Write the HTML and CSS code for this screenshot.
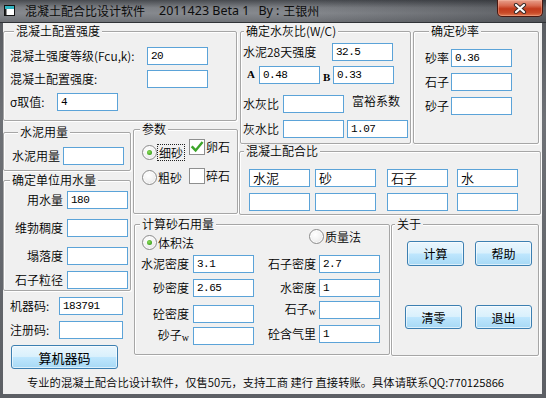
FILE: index.html
```html
<!DOCTYPE html>
<html>
<head>
<meta charset="utf-8">
<link rel="stylesheet" href="styles.css">
</head>
<body>
<div class="window">
  <div class="titlebar">
    <svg class="app-icon" width="11" height="11" viewBox="0 0 11 11"><rect x="0.5" y="0.5" width="10" height="10" fill="#fff" stroke="#111"/><rect x="1" y="1" width="9" height="3" fill="#2fb3c0"/><rect x="1" y="4" width="1.5" height="6" fill="#222"/></svg>
    <span class="t-main">混凝土配合比设计软件</span>
    <span class="t-ver">2011423 Beta 1</span>
    <span class="t-by">By</span>
    <span class="t-colon">:</span>
    <span class="t-author">王银州</span>
    <div class="close-btn">
      <svg width="14" height="11" viewBox="0 0 14 11"><path d="M3 2 L11 9 M11 2 L3 9" stroke="#3a2a28" stroke-width="4.2" stroke-linecap="round"/><path d="M3 2 L11 9 M11 2 L3 9" stroke="#fff" stroke-width="2.2" stroke-linecap="round"/></svg>
    </div>
  </div>
  <div class="client">
    <div class="layout">
      <fieldset class="grp g-strength">
        <legend class="lg7">混凝土配置强度</legend>
        <div class="row"><span class="lbl w137">混凝土强度等级(Fcu,k):</span><div class="tb">20</div></div>
        <div class="row mt5"><span class="lbl w137">混凝土配置强度:</span><div class="tb"></div></div>
        <div class="row mt5"><span class="lbl w47">σ取值:</span><div class="tb">4</div></div>
      </fieldset>

      <fieldset class="grp g-wc">
        <legend class="lg4">确定水灰比(W/C)</legend>
        <div class="row mt5"><span class="lbl w89">水泥28天强度</span><div class="tb">32.5</div></div>
        <div class="row mt5"><span class="ab ab-a">A</span><div class="tb">0.48</div><span class="ab ab-b">B</span><div class="tb">0.33</div></div>
        <div class="row mt11"><span class="lbl w40">水灰比</span><div class="tb"></div><span class="lbl note">富裕系数</span></div>
        <div class="row mt7"><span class="lbl w40">灰水比</span><div class="tb"></div><div class="tb ml3">1.07</div></div>
      </fieldset>

      <fieldset class="grp g-sand">
        <legend class="lg7">确定砂率</legend>
        <div class="row mt11"><span class="lbl w26">砂率</span><div class="tb">0.36</div></div>
        <div class="row mt6"><span class="lbl w26">石子</span><div class="tb"></div></div>
        <div class="row mt6"><span class="lbl w26">砂子</span><div class="tb"></div></div>
      </fieldset>

      <fieldset class="grp g-cement">
        <legend class="lg9">水泥用量</legend>
        <div class="row mt8"><span class="lbl w51">水泥用量</span><div class="tb"></div></div>
      </fieldset>

      <fieldset class="grp g-param">
        <legend class="lg9">参数</legend>
        <div class="param-body">
          <div class="pcol radios">
            <div class="opt"><span class="radio on"></span><span class="olbl focus">细砂</span></div>
            <div class="opt"><span class="radio"></span><span class="olbl">粗砂</span></div>
          </div>
          <div class="pcol checks">
            <div class="opt"><span class="check"><svg width="14" height="14" viewBox="0 0 14 14"><path d="M2.5 7.2 L5.6 10.4 L11.8 3" fill="none" stroke="#3da52a" stroke-width="2.4" stroke-linecap="square"/></svg></span><span class="olbl">卵石</span></div>
            <div class="opt"><span class="check"></span><span class="olbl">碎石</span></div>
          </div>
        </div>
      </fieldset>

      <fieldset class="grp g-mix">
        <legend class="lg7">混凝土配合比</legend>
        <div class="mix-grid">
          <div class="tb cjk">水泥</div>
          <div class="tb cjk">砂</div>
          <div class="tb cjk">石子</div>
          <div class="tb cjk">水</div>
          <div class="tb"></div>
          <div class="tb"></div>
          <div class="tb"></div>
          <div class="tb"></div>
        </div>
      </fieldset>

      <fieldset class="grp g-water">
        <legend class="lg9">确定单位用水量</legend>
        <div class="row mt4"><span class="lbl r w59">用水量</span><div class="tb ml4">180</div></div>
        <div class="row mt10"><span class="lbl r w59">维勃稠度</span><div class="tb ml4"></div></div>
        <div class="row mt10"><span class="lbl r w59">塌落度</span><div class="tb ml4"></div></div>
        <div class="row mt6"><span class="lbl r w59">石子粒径</span><div class="tb ml4"></div></div>
      </fieldset>

      <div class="reg">
        <div class="row"><span class="lbl w49">机器码:</span><div class="tb w64">183791</div></div>
        <div class="row mt6"><span class="lbl w49">注册码:</span><div class="tb w64"></div></div>
        <button class="btn btn-code">算机器码</button>
      </div>

      <fieldset class="grp g-calc">
        <legend class="lg8">计算砂石用量</legend>
        <div class="calc-radios">
          <div class="opt vol"><span class="radio on"></span><span class="olbl">体积法</span></div>
          <div class="opt mass"><span class="radio"></span><span class="olbl">质量法</span></div>
        </div>
        <div class="calc-cols">
          <div class="ccol">
            <div class="row"><span class="lbl r w48">水泥密度</span><div class="tb ml4">3.1</div></div>
            <div class="row mt6"><span class="lbl r w48">砂密度</span><div class="tb ml4">2.65</div></div>
            <div class="row mt8"><span class="lbl r w48">砼密度</span><div class="tb ml4"></div></div>
            <div class="row mt4"><span class="lbl r w48">砂子<span class="small-w">w</span></span><div class="tb ml4"></div></div>
          </div>
          <div class="ccol ccol-right">
            <div class="row"><span class="lbl r w48">石子密度</span><div class="tb ml3">2.7</div></div>
            <div class="row mt6"><span class="lbl r w48">水密度</span><div class="tb ml3">1</div></div>
            <div class="row mt4"><span class="lbl r w48">石子<span class="small-w">w</span></span><div class="tb ml3"></div></div>
            <div class="row mt6"><span class="lbl r w48">砼含气里</span><div class="tb ml3">1</div></div>
          </div>
        </div>
      </fieldset>

      <fieldset class="grp g-about">
        <legend class="lg6">关于</legend>
        <div class="btn-row br1"><button class="btn">计算</button><button class="btn">帮助</button></div>
        <div class="btn-row br2"><button class="btn">清零</button><button class="btn">退出</button></div>
      </fieldset>
    </div>
    <div class="status">专业的混凝土配合比设计软件，仅售50元，支持工商 建行 直接转账。具体请联系QQ:770125866</div>
  </div>
</div>
</body>
</html>
```
FILE: styles.css
```css
* { box-sizing: border-box; }
html, body { margin: 0; padding: 0; }
body {
  width: 546px;
  height: 398px;
  overflow: hidden;
  font-family: "Noto Sans CJK SC", "Noto Sans", sans-serif;
  font-weight: 350;
  font-size: 12px;
  line-height: 14px;
  color: #000;
  background: #fff;
}
.window {
  width: 546px;
  height: 398px;
  display: flex;
  flex-direction: column;
  background: linear-gradient(to bottom, #55585d 0, #6e7176 30%, #5c5f64 100%);
}
.titlebar {
  height: 23px;
  flex: none;
  display: flex;
  align-items: center;
  border-bottom: 1px solid #2f3236;
  background:
    linear-gradient(to right, rgba(0,0,0,0) 0, rgba(0,0,0,0) 55%, rgba(20,22,26,0.35) 100%),
    linear-gradient(to bottom, #474a4f 0, #7d8085 35%, #86898e 60%, #6f7277 100%);
  white-space: pre;
  color: #0c0c0c;
  font-weight: 400;
}
.app-icon { margin-left: 4px; margin-top: -1px; flex: none; }
.t-main { margin-left: 10px; font-size: 12px; }
.t-ver { margin-left: 14px; font-family: "Noto Sans", sans-serif; font-size: 12.5px; }
.t-by { margin-left: 9px; font-family: "Noto Sans", sans-serif; font-size: 12.5px; }
.t-colon { margin-left: 3px; font-family: "Noto Sans", sans-serif; font-size: 12.5px; }
.t-author { margin-left: 4px; font-size: 12px; }
.close-btn {
  margin-left: auto;
  margin-right: 3px;
  align-self: flex-start;
  width: 46px;
  height: 17px;
  border: 1px solid #4a1810;
  border-top: none;
  border-radius: 0 0 5px 5px;
  background: linear-gradient(to bottom, #e8a08c 0, #d86a50 35%, #c23a1c 55%, #c84a28 80%, #e07a52 100%);
  display: flex;
  align-items: center;
  justify-content: center;
  box-shadow: inset 0 0 0 1px rgba(255,200,180,0.35);
}
.client {
  flex: 1;
  margin: 0 4px 4px 3px;
  background: #f0f0f0;
  display: flex;
  flex-direction: column;
}
.layout {
  display: grid;
  grid-template-columns: 129px 106px 152px 21px 131px;
  grid-template-rows: 98px 23px 29px 42px 76px 65px 15px;
}
.grp {
  margin: 0;
  padding: 0;
  min-width: 0;
  border: 1px solid #a6a6a6;
  border-radius: 2px;
  box-shadow: inset 1px 1px 0 #fff, 1px 1px 0 #fff;
}
.grp > legend {
  padding: 0 2px;
  line-height: 14px;
  font-size: 12px;
  background: #f0f0f0;
}
.lg4 { margin-left: 1px; }
.lg6 { margin-left: 3px; }
.lg7 { margin-left: 4px; }
.lg8 { margin-left: 5px; }
.lg9 { margin-left: 6px; }

.row { display: flex; align-items: center; height: 18px; }
.mt4 { margin-top: 4px; }
.mt5 { margin-top: 5px; }
.mt6 { margin-top: 6px; }
.mt7 { margin-top: 7px; }
.mt8 { margin-top: 8px; }
.mt10 { margin-top: 10px; }
.mt11 { margin-top: 11px; }
.ml3 { margin-left: 3px; }
.ml4 { margin-left: 4px; }

.lbl { display: block; flex: none; white-space: nowrap; }
.lbl.r { text-align: right; }
.w26 { width: 26px; }
.w40 { width: 40px; }
.w47 { width: 47px; }
.w48 { width: 48px; }
.w49 { width: 49px; }
.w51 { width: 51px; }
.w59 { width: 59px; }
.w89 { width: 89px; }
.w137 { width: 137px; }
.small-w { font-family: "Liberation Serif", serif; font-size: 10px; vertical-align: -1px; }

.tb {
  flex: none;
  width: 61px;
  height: 18px;
  border: 1px solid #5ba3d8;
  background: #fff;
  font-family: "Liberation Mono", "DejaVu Sans Mono", monospace;
  font-weight: 400;
  font-size: 11px;
  letter-spacing: -0.5px;
  line-height: 16px;
  padding-left: 3px;
  white-space: pre;
}
.tb.w64 { width: 64px; }
.tb.cjk {
  font-family: "Noto Sans CJK SC", sans-serif;
  font-weight: 350;
  font-size: 13px;
  letter-spacing: 0;
  padding-left: 3px;
}

.ab { font-family: "Liberation Serif", serif; font-weight: bold; font-size: 11px; flex: none; }
.ab-a { width: 16px; padding-left: 4px; margin-top: -3px; }
.ab-b { width: 13px; padding-left: 3px; margin-top: 3px; }
.note { margin-left: 8px; align-self: flex-start; margin-top: -1px; }

/* groups placement */
.g-strength { grid-column: 1 / 3; grid-row: 1 / 2; margin: 1px 1px 0 0; padding: 9px 0 0 6px; }
.g-wc { grid-column: 3 / 5; grid-row: 1 / 3; margin: 1px 0 0 2px; padding: 0 0 0 2px; }
.g-sand { grid-column: 5 / 6; grid-row: 1 / 3; margin: 1px 3px 0 2px; padding: 0 0 0 11px; }
.g-cement { grid-column: 1 / 2; grid-row: 2 / 4; margin: 4px 1px 2px 0; padding: 0 0 0 8px; }
.g-param { grid-column: 2 / 3; grid-row: 2 / 5; margin: 1px 0 1px 1px; }
.g-mix { grid-column: 3 / 6; grid-row: 3 / 5; margin: 0 1px 0 1px; }
.g-water { grid-column: 1 / 2; grid-row: 4 / 6; margin: 0 1px 0 0; }
.reg { grid-column: 1 / 2; grid-row: 6 / 8; padding: 6px 0 0 7px; }
.g-calc { grid-column: 2 / 4; grid-row: 5 / 7; margin: 2px 0 1px 2px; }
.g-about { grid-column: 4 / 6; grid-row: 5 / 7; margin: 2px 3px 0 1px; }

/* param */
.param-body { display: flex; padding-left: 8px; }
.pcol { display: flex; flex-direction: column; }
.radios { width: 47px; padding-top: 8px; gap: 9px; }
.checks { padding-top: 3px; gap: 13px; }
.opt { display: flex; align-items: center; }
.radio {
  flex: none;
  width: 15px;
  height: 15px;
  border: 1px solid #8b8b8b;
  border-radius: 50%;
  background: radial-gradient(circle at 40% 35%, #ffffff 0, #f2f2f2 50%, #d9d9d9 100%);
  display: flex;
  align-items: center;
  justify-content: center;
  box-shadow: inset 0 0 0 1px #fdfdfd;
}
.radio.on::after {
  content: "";
  width: 5px;
  height: 5px;
  border-radius: 50%;
  background: radial-gradient(circle at 40% 40%, #8fe05a 0, #3fa321 70%, #2d8a18 100%);
}
.olbl { margin-left: 1px; white-space: nowrap; }
.olbl.focus { border: 1px dotted #222; line-height: 15px; padding: 0 1px; margin-left: 0; }
.check {
  flex: none;
  width: 16px;
  height: 16px;
  border: 1px solid #8e8f8f;
  background: #fff;
  display: flex;
  align-items: center;
  justify-content: center;
}
.checks .olbl { margin-left: 1px; }

/* mix */
.mix-grid {
  display: grid;
  grid-template-columns: 66px 72px 70px 61px;
  row-gap: 6px;
  padding: 11px 0 0 9px;
}

/* calc */
.calc-radios { display: flex; height: 19px; padding-left: 7px; }
.vol { align-self: flex-end; }
.mass { align-self: flex-start; margin-top: -2px; margin-left: 115px; }
.calc-cols { display: flex; margin-top: 5px; padding-left: 6px; }
.ccol { display: flex; flex-direction: column; }
.ccol-right { margin-left: 14px; }

/* buttons */
.btn {
  font-family: "Noto Sans CJK SC", sans-serif;
  font-weight: 400;
  font-size: 12px;
  color: #000;
  padding: 0;
  width: 57px;
  height: 25px;
  border: 1px solid #3c7fb1;
  border-radius: 3px;
  background: linear-gradient(to bottom, #eaf6fd 0, #d9f0fc 48%, #bee6fd 52%, #a7d9f5 100%);
  box-shadow: inset 0 0 0 1px rgba(255,255,255,0.6);
}
.btn-code { display: block; width: 107px; height: 24px; margin: 6px 0 0 1px; font-size: 13px; }
.btn-row { display: flex; }
.br1 { margin-top: 10px; padding-left: 15px; gap: 11px; }
.br2 { margin-top: 39px; padding-left: 13px; gap: 13px; }
.br2 .btn { height: 24px; }

.status {
  height: 23px;
  line-height: 23px;
  padding-left: 24px;
  white-space: nowrap;
  font-size: 11.3px;
}
```
